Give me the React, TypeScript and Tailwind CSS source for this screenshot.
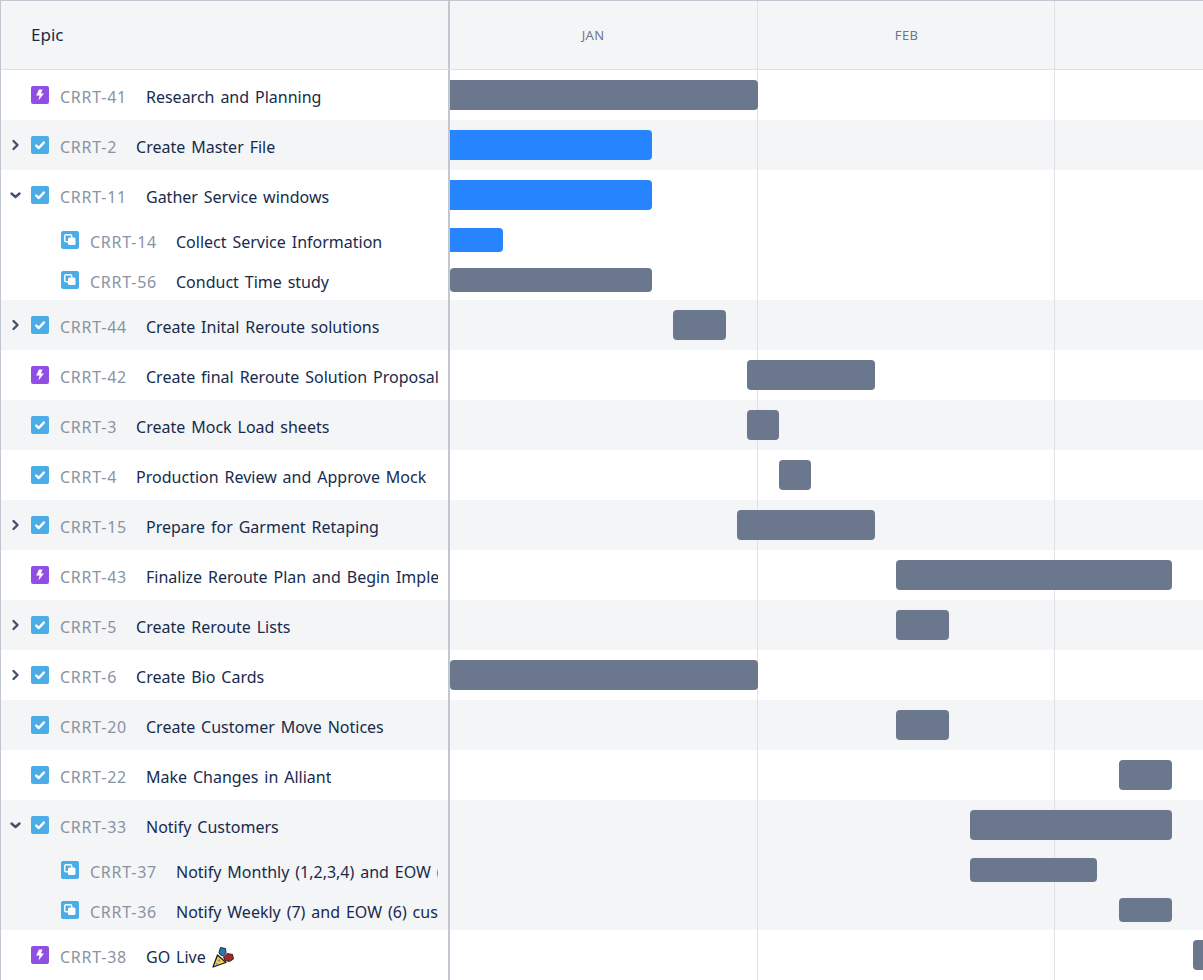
type Kind = 'epic' | 'story' | 'sub';

interface Row {
  id: string;
  title: string;
  kind: Kind;
  caret?: 'open' | 'closed';
  start: number;
  width: number;
  blue?: boolean;
  party?: boolean;
  clipped?: boolean;
}

const rows: Row[] = [
  { id: 'CRRT-41', title: 'Research and Planning', kind: 'epic', start: 0, width: 308, clipped: true },
  { id: 'CRRT-2', title: 'Create Master File', kind: 'story', caret: 'closed', start: 0, width: 202, blue: true, clipped: true },
  { id: 'CRRT-11', title: 'Gather Service windows', kind: 'story', caret: 'open', start: 0, width: 202, blue: true, clipped: true },
  { id: 'CRRT-14', title: 'Collect Service Information', kind: 'sub', start: 0, width: 53, blue: true, clipped: true },
  { id: 'CRRT-56', title: 'Conduct Time study', kind: 'sub', start: 0, width: 202 },
  { id: 'CRRT-44', title: 'Create Inital Reroute solutions', kind: 'story', caret: 'closed', start: 223, width: 53 },
  { id: 'CRRT-42', title: 'Create final Reroute Solution Proposal', kind: 'epic', start: 297, width: 128 },
  { id: 'CRRT-3', title: 'Create Mock Load sheets', kind: 'story', start: 297, width: 32 },
  { id: 'CRRT-4', title: 'Production Review and Approve Mock', kind: 'story', start: 329, width: 32 },
  { id: 'CRRT-15', title: 'Prepare for Garment Retaping', kind: 'story', caret: 'closed', start: 287, width: 138 },
  { id: 'CRRT-43', title: 'Finalize Reroute Plan and Begin Implementation', kind: 'epic', start: 446, width: 276 },
  { id: 'CRRT-5', title: 'Create Reroute Lists', kind: 'story', caret: 'closed', start: 446, width: 53 },
  { id: 'CRRT-6', title: 'Create Bio Cards', kind: 'story', caret: 'closed', start: 0, width: 308 },
  { id: 'CRRT-20', title: 'Create Customer Move Notices', kind: 'story', start: 446, width: 53 },
  { id: 'CRRT-22', title: 'Make Changes in Alliant', kind: 'story', start: 669, width: 53 },
  { id: 'CRRT-33', title: 'Notify Customers', kind: 'story', caret: 'open', start: 520, width: 202 },
  { id: 'CRRT-37', title: 'Notify Monthly (1,2,3,4) and EOW (6) customers', kind: 'sub', start: 520, width: 127 },
  { id: 'CRRT-36', title: 'Notify Weekly (7) and EOW (6) customers', kind: 'sub', start: 669, width: 53 },
  { id: 'CRRT-38', title: 'GO Live', kind: 'epic', start: 743, width: 53, party: true },
];

// grey stripes follow the parent rows, sub rows keep their parent's colour
const greyRows = ['CRRT-2', 'CRRT-44', 'CRRT-3', 'CRRT-15', 'CRRT-5', 'CRRT-20', 'CRRT-33', 'CRRT-37', 'CRRT-36'];

function Caret({ open }: { open: boolean }) {
  return (
    <svg width="16" height="16" viewBox="0 0 16 16" className="absolute left-[7px] top-[17px]">
      <path
        d={open ? 'M3.5 6.500 7.500 10l4-3.500' : 'M5.500 4 9.500 8l-4 4'}
        fill="none"
        stroke="#42526E"
        strokeWidth="2.4"
        strokeLinecap="round"
        strokeLinejoin="round"
      />
    </svg>
  );
}

function IssueIcon({ kind }: { kind: Kind }) {
  if (kind === 'epic') {
    return (
      <svg width="18" height="18" viewBox="0 0 18 18" className="shrink-0">
        <rect width="18" height="18" rx="2" fill="#904EE2" />
        <path d="M8 3.500h3.500L10 7.500h3l-5.500 7 1-5H5.200z" fill="#fff" />
      </svg>
    );
  }
  if (kind === 'story') {
    return (
      <svg width="18" height="18" viewBox="0 0 18 18" className="shrink-0">
        <rect width="18" height="18" rx="2" fill="#4BADE8" />
        <path d="m5.200 9.600 2.600 2.400 5-5.400" fill="none" stroke="#fff" strokeWidth="2.500" strokeLinecap="round" strokeLinejoin="round" />
      </svg>
    );
  }
  return (
    <svg width="18" height="18" viewBox="0 0 18 18" className="shrink-0">
      <rect width="18" height="18" rx="2" fill="#4BADE8" />
      <rect x="3.700" y="3.700" width="7" height="7" rx="1.500" fill="none" stroke="#fff" strokeWidth="1.500" />
      <rect x="7" y="6.500" width="7.500" height="7.500" rx="1.500" fill="#fff" />
    </svg>
  );
}

function PartyPopper() {
  return (
    <svg width="22" height="22" viewBox="0 0 22 22" className="ml-[6px] mt-[1px] shrink-0">
      <path d="M1 21 5.500 9l8.500 7.500z" fill="#F6C945" stroke="#1b1b1b" strokeWidth="1.300" strokeLinejoin="round" />
      <circle cx="7" cy="14.500" r="1.100" fill="#2E9BD6" />
      <circle cx="4.800" cy="17.800" r="0.900" fill="#2E9BD6" />
      <path d="M7 6.500 8.500 1.500l5 1 .5 4-2.500 3.500-3-1z" fill="#1F7FA8" stroke="#1b1b1b" strokeWidth="0.900" />
      <path d="M11.500 11 15 7.500l5.500 1 1 4.500-4 2.500-4.500-1z" fill="#A3262A" stroke="#1b1b1b" strokeWidth="0.900" />
      <circle cx="12.500" cy="9" r="1.200" fill="#7A4BB0" />
    </svg>
  );
}

export default function App() {
  return (
    <div className="w-[1203px] h-[980px] overflow-hidden bg-white border-t border-l border-[#C1C7D0] text-[#172B4D] relative font-['Noto_Sans',sans-serif]">
      {/* Month lines */}
      <div className="absolute left-[756px] top-0 bottom-0 w-px bg-[#DFE1E6] z-10" />
      <div className="absolute left-[1053px] top-0 bottom-0 w-px bg-[#DFE1E6] z-10" />

      {/* Header */}
      <div className="flex h-[69px] bg-[#F4F5F7] border-b border-[#DFE1E6]">
        <div className="w-[449px] shrink-0 border-r-2 border-[#C1C7D0] pl-[30px] flex items-center">
          <span className="text-[17px]">Epic</span>
        </div>
        <div className="flex text-[13px] tracking-[0.3px] text-[#6B778C] pt-[2px]">
          <div className="w-[307px] flex items-center justify-center pr-[21px]">JAN</div>
          <div className="w-[297px] flex items-center justify-center pl-[2px]">FEB</div>
        </div>
      </div>

      {/* Rows */}
      {rows.map((r) => {
        const isSub = r.kind === 'sub';
        const grey = greyRows.includes(r.id);
        return (
          <div key={r.id} className={`flex ${isSub ? 'h-[40px]' : 'h-[50px]'} ${grey ? 'bg-[#F4F5F7]' : 'bg-white'}`}>
            <div className={`w-[449px] shrink-0 border-r-2 border-[#C1C7D0] flex items-center pr-[10px] ${isSub ? 'pl-[60px]' : 'pl-[30px]'} relative`}>
              {r.caret && <Caret open={r.caret === 'open'} />}
              <IssueIcon kind={r.kind} />
              <div className="flex items-center min-w-0 overflow-hidden pt-[3px]">
                <span className="ml-[11px] mr-[19px] text-[#8993A4] whitespace-nowrap text-base tracking-[0.75px]">{r.id}</span>
                <span className="whitespace-nowrap text-base [word-spacing:1.75px]">{r.title}</span>
                {r.party && <PartyPopper />}
              </div>
            </div>
            <div className="flex items-center min-w-0">
              <div
                className={`shrink-0 relative z-20 ${r.clipped ? 'rounded-r-[4px]' : 'rounded-[4px]'} ${isSub ? 'h-[24px]' : 'h-[30px]'} ${r.blue ? 'bg-[#2684FF]' : 'bg-[#6B778C]'}`}
                style={{ marginLeft: r.start, width: r.width }}
              />
            </div>
          </div>
        );
      })}
    </div>
  );
}
